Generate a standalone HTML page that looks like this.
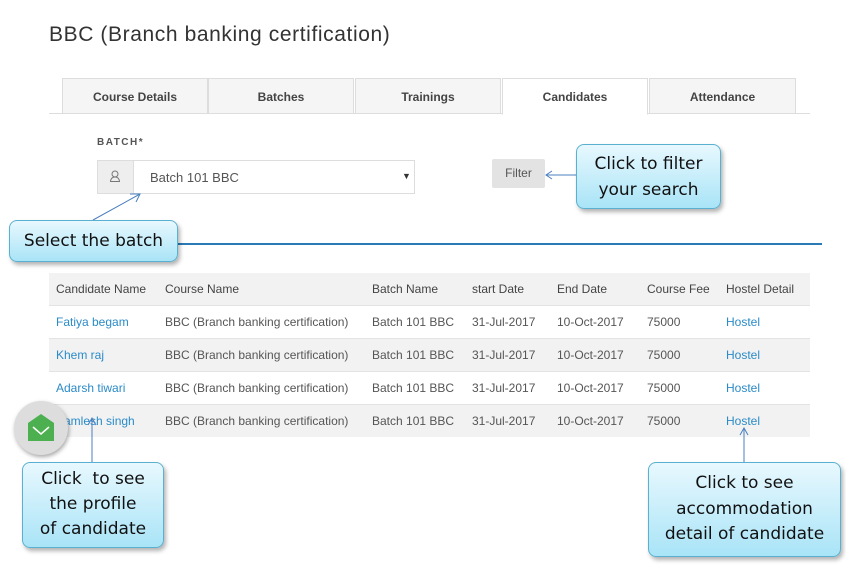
<!DOCTYPE html>
<html><head><style>
body{margin:0;width:846px;height:566px;background:#fff;font-family:"Liberation Sans",sans-serif;position:relative;overflow:hidden}
.a{position:absolute}
.tab{position:absolute;top:78px;height:36px;width:146px;background:#f5f5f5;border:1px solid #ddd;box-sizing:border-box;font-size:12px;font-weight:bold;color:#444;text-align:center;line-height:36px}
.call{position:absolute;border:1px solid #5ab0d0;border-radius:8px;background:linear-gradient(#e8f8fe,#a9e4f7);box-shadow:2px 3px 4px rgba(0,0,0,.3);font-family:"DejaVu Sans",sans-serif;font-size:17px;color:#111;text-align:center;box-sizing:border-box}
table{position:absolute;left:49px;top:273px;width:761px;border-collapse:collapse;font-size:12px;color:#555;table-layout:fixed}
td,th{padding:0;box-sizing:border-box;white-space:nowrap;overflow:hidden}
th{height:32px}
td{height:33px;border-top:1px solid #e3e3e3}
th{font-weight:normal;text-align:left;color:#444}
.l{color:#2a8bc8}
</style></head><body>
<div class="a" style="left:49px;top:23px;font-size:21px;color:#333;letter-spacing:0.6px">BBC (Branch banking certification)</div>
<div class="a" style="left:49px;top:113px;width:761px;border-top:1px solid #ddd"></div>
<div class="tab" style="left:62px">Course Details</div>
<div class="tab" style="left:208px">Batches</div>
<div class="tab" style="left:355px">Trainings</div>
<div class="tab" style="left:502px;background:#fff;border-bottom-color:#fff;height:37px">Candidates</div>
<div class="tab" style="left:649px;width:147px">Attendance</div>
<div class="a" style="left:97px;top:137px;font-size:10px;font-weight:bold;letter-spacing:1.5px;color:#555">BATCH*</div>
<div class="a" style="left:97px;top:160px;width:318px;height:34px;border:1px solid #ddd;box-sizing:border-box"></div>
<div class="a" style="left:98px;top:161px;width:35px;height:32px;background:#eee;border-right:1px solid #ddd"></div>
<svg class="a" style="left:109px;top:170px" width="12" height="13"><circle cx="6" cy="4" r="3" stroke="#777" fill="none"/><path d="M1.5 11.5 Q2 7 6 7 Q10 7 10.5 11.5 Z" stroke="#777" fill="none"/></svg>
<div class="a" style="left:150px;top:170px;font-size:13px;color:#555">Batch 101 BBC</div>
<div class="a" style="left:402px;top:171px;font-size:9px;color:#333">▼</div>
<div class="a" style="left:492px;top:159px;width:53px;height:29px;background:#e3e3e3;border-radius:2px;font-size:12px;color:#555;text-align:center;line-height:29px">Filter</div>
<table>
<colgroup><col style="width:116px"><col style="width:207px"><col style="width:100px"><col style="width:85px"><col style="width:90px"><col style="width:79px"><col></colgroup>
<tr style="background:#f2f2f2"><th style="padding-left:7px">Candidate Name</th><th>Course Name</th><th>Batch Name</th><th>start Date</th><th>End Date</th><th>Course Fee</th><th>Hostel Detail</th></tr>
<tr style="background:#fff"><td class="l" style="padding-left:7px">Fatiya begam</td><td>BBC (Branch banking certification)</td><td>Batch 101 BBC</td><td>31-Jul-2017</td><td>10-Oct-2017</td><td>75000</td><td class="l">Hostel</td></tr>
<tr style="background:#f2f2f2"><td class="l" style="padding-left:7px">Khem raj</td><td>BBC (Branch banking certification)</td><td>Batch 101 BBC</td><td>31-Jul-2017</td><td>10-Oct-2017</td><td>75000</td><td class="l">Hostel</td></tr>
<tr style="background:#fff"><td class="l" style="padding-left:7px">Adarsh tiwari</td><td>BBC (Branch banking certification)</td><td>Batch 101 BBC</td><td>31-Jul-2017</td><td>10-Oct-2017</td><td>75000</td><td class="l">Hostel</td></tr>
<tr style="background:#f2f2f2"><td class="l" style="padding-left:7px">Kamlesh singh</td><td>BBC (Branch banking certification)</td><td>Batch 101 BBC</td><td>31-Jul-2017</td><td>10-Oct-2017</td><td>75000</td><td class="l">Hostel</td></tr>
</table>
<svg class="a" style="left:0;top:0" width="846" height="566">
<line x1="178" y1="244" x2="822" y2="244" stroke="#2a7ab8" stroke-width="2"/>
<g stroke="#4a7fc0" fill="none" stroke-width="1">
<line x1="93" y1="220" x2="140" y2="194"/><polyline points="130,194 140,194 136,202"/>
<line x1="576" y1="175" x2="546" y2="175"/><polyline points="552,171 546,175 552,179"/>
<line x1="92" y1="462" x2="92" y2="418"/><polyline points="88,425 92,418 96,425"/>
<line x1="744" y1="462" x2="744" y2="428"/><polyline points="740,435 744,428 748,435"/>
</g></svg>
<div class="a" style="left:14px;top:401px;width:54px;height:54px;border-radius:50%;background:#ddd;box-shadow:1px 2px 4px rgba(0,0,0,.35)"></div>
<svg class="a" style="left:27px;top:413px" width="28" height="28"><path d="M1 10 L14 1 L27 10 L27 28 L1 28Z" fill="#4caf50"/><polyline points="6,14 14,21 22,14" stroke="#fff" fill="none" stroke-width="1.5"/></svg>
<div class="call" style="left:576px;top:144px;width:145px;height:65px;padding-top:6px;line-height:26px">Click to filter<br>your search</div>
<div class="call" style="left:9px;top:220px;width:169px;height:42px;line-height:40px">Select the batch</div>
<div class="call" style="left:22px;top:462px;width:142px;height:86px;padding-top:4px;line-height:25px">Click&nbsp; to see<br>the profile<br>of candidate</div>
<div class="call" style="left:648px;top:462px;width:193px;height:95px;padding-top:8px;line-height:25.5px">Click to see<br>accommodation<br>detail of candidate</div>
</body></html>
